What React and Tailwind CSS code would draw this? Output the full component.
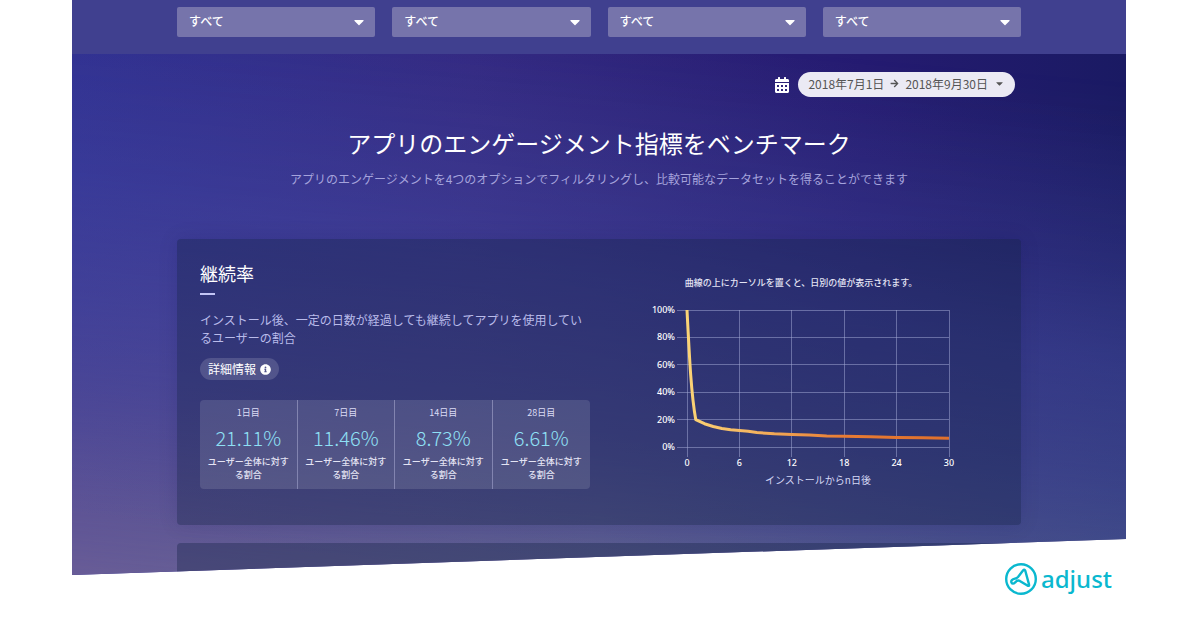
import { FaArrowRight, FaCalendarAlt, FaCaretDown, FaInfoCircle } from "react-icons/fa";

const filters = ["カテゴリー", "地域", "プラットフォーム", "国"];

const stats = [
  { day: "1日目", value: "21.11%" },
  { day: "7日目", value: "11.46%" },
  { day: "14日目", value: "8.73%" },
  { day: "28日目", value: "6.61%" },
];

// [day, retention %]
const retention = [
  [2, 17], [3, 15], [4, 13.5], [5, 12.6], [6, 12], [7, 11.5], [8, 10.6], [10, 9.6],
  [12, 9.1], [14, 8.8], [16, 8.1], [18, 7.8], [21, 7.5], [24, 6.9], [27, 6.7], [30, 6.3],
];

const chart = { left: 46, top: 10, width: 262, height: 137 };
const toX = (day) => chart.left + (day / 30) * chart.width;
const toY = (pct) => chart.top + (1 - pct / 100) * chart.height;

const FilterSelect = ({ label }) => (
  <div className="relative">
    <select
      aria-label={label}
      className="block w-full h-[30px] pl-3 pr-8 pb-0.5 appearance-none rounded-[2px] bg-[#7674ab] text-xs font-medium text-white"
    >
      <option>すべて</option>
    </select>
    <FaCaretDown
      size={16}
      className="absolute right-2 top-1/2 -translate-y-1/2 text-white pointer-events-none"
    />
  </div>
);

const RetentionChart = () => {
  const tail = retention.map(([day, pct]) => `L${toX(day)} ${toY(pct)}`).join(" ");
  const curve = `M${toX(0)} ${toY(100)} C${toX(0.3)} ${toY(62)} ${toX(0.5)} ${toY(38)} ${toX(1)} ${toY(20)} ${tail}`;

  return (
    <svg width="320" height="190" viewBox="0 0 320 190" role="img" aria-label="継続率" className="mt-[10px]">
      <defs>
        <linearGradient id="curve" gradientUnits="userSpaceOnUse" x1="46" y1="0" x2="308" y2="0">
          <stop offset="0" stopColor="#fbd476" />
          <stop offset="0.25" stopColor="#f5b560" />
          <stop offset="0.6" stopColor="#e87b33" />
          <stop offset="1" stopColor="#e0702b" />
        </linearGradient>
      </defs>

      <g stroke="#a5abd8" strokeOpacity="0.5" shapeRendering="crispEdges">
        {[0, 20, 40, 60, 80, 100].map((pct) => (
          <line key={pct} x1={chart.left - 10} x2={toX(30)} y1={toY(pct)} y2={toY(pct)} />
        ))}
        {[0, 6, 12, 18, 24, 30].map((day) => (
          <line key={day} x1={toX(day)} x2={toX(day)} y1={chart.top} y2={toY(0) + 10} />
        ))}
      </g>

      <path d={curve} fill="none" stroke="url(#curve)" strokeWidth="3" strokeLinejoin="round" />

      <g className="fill-white text-[9px] font-medium font-['Noto_Sans','Noto_Sans_CJK_JP',sans-serif]">
        {[0, 20, 40, 60, 80, 100].map((pct) => (
          <text key={pct} x="34" y={toY(pct) + 3} textAnchor="end">
            {pct}%
          </text>
        ))}
        {[0, 6, 12, 18, 24, 30].map((day) => (
          <text key={day} x={toX(day)} y="166" textAnchor="middle">
            {day}
          </text>
        ))}
      </g>
      <text
        x={toX(15)}
        y="184"
        textAnchor="middle"
        className="fill-[#d5d8f5] text-[10px] font-['Noto_Sans_CJK_JP',sans-serif]"
      >
        インストールからn日後
      </text>
    </svg>
  );
};

const Logo = () => (
  <a href="#" className="flex items-center gap-1 text-[#0ab8cf]">
    <svg width="32" height="32" viewBox="0 0 32 32" fill="none" stroke="currentColor">
      <circle cx="16" cy="16" r="14.8" strokeWidth="2.4" />
      <path
        d="M24 21.4 L20.3 7.8 Q19.4 5.8 18 7.6 L13 14 Q12 15.2 10 15.7 Q5.6 16.8 6.4 19.4 Q7.6 21.8 10.2 19.4 Q12.4 16.8 14.8 17.9 L22.4 22.6 Q24.6 23.4 24 21.4 Z"
        strokeWidth="2.4"
        strokeLinejoin="round"
      />
    </svg>
    <span className="text-2xl leading-7 font-medium font-['Noto_Sans',sans-serif]">adjust</span>
  </a>
);

export default function App() {
  return (
    <div className="min-h-screen bg-white overflow-hidden font-['Noto_Sans_CJK_JP',sans-serif]">
      <main className="relative ml-[72px] mr-[74px] bg-[linear-gradient(to_right,#2c2c8d,#32277f_38%,#251b71_75%,#1a1a63)] [clip-path:polygon(0_0,100%_0,100%_calc(100%_-_36px),0_100%)]">
        {/* Lighter haze rising from the bottom left */}
        <div className="absolute inset-0 bg-[linear-gradient(to_right,#685c97,#666a92_50%,#50608c)] [mask-image:linear-gradient(185deg,transparent_12%,rgb(0_0_0/0.15)_40%,rgb(0_0_0/0.5)_70%,black_100%)]" />
        {/* Blue band across the middle */}
        <div className="absolute inset-0 bg-[linear-gradient(190deg,transparent_15%,rgb(64_72_172/0.34)_48%,rgb(64_72_172/0.28)_65%,transparent_92%)]" />

        <div className="relative">
          <div className="px-[105px] pt-[7px] pb-[17px] bg-[#40408f] grid grid-cols-4 gap-[17px]">
            {filters.map((label) => (
              <FilterSelect key={label} label={label} />
            ))}
          </div>

          <div className="px-[105px]">
            <div className="flex justify-end items-center gap-2 pt-[18px] pr-[6px]">
              <FaCalendarAlt size={16} className="text-white" />
              <button
                type="button"
                className="flex items-center gap-[6px] h-[25px] pb-0.5 px-[10px] rounded-full bg-[#ebeaf4] text-xs text-[#555]"
              >
                2018年7月1日
                <FaArrowRight size={9} />
                2018年9月30日
                <FaCaretDown size={11} />
              </button>
            </div>

            <h1 className="mt-[30px] text-2xl leading-8 text-center text-white">
              アプリのエンゲージメント指標をベンチマーク
            </h1>
            <p className="mt-[10px] text-xs leading-5 text-center text-[#a5a3dc]">
              アプリのエンゲージメントを4つのオプションでフィルタリングし、比較可能なデータセットを得ることができます
            </p>

            <section className="mt-[50px] pt-5 pb-[35px] pl-[23px] pr-[25px] grid grid-cols-2 gap-4 rounded-[4px] bg-[#101f42]/35 shadow-[0_0_20px_rgba(20,20,70,0.12)]">
              <div>
                <h2 className="text-lg leading-7 text-white">継続率</h2>
                <div className="mt-[6px] w-[15px] h-0.5 bg-[#c3c5f5]" />
                <p className="mt-4 text-xs leading-[18px] text-[#b9bbea]">
                  インストール後、一定の日数が経過しても継続してアプリを使用しているユーザーの割合
                </p>
                <button
                  type="button"
                  className="mt-[11px] flex items-center gap-1 h-[22px] px-2 rounded-full bg-white/15 text-xs text-white"
                >
                  詳細情報
                  <FaInfoCircle size={11} />
                </button>

                <dl className="mt-5 grid grid-cols-4 rounded-[4px] bg-white/12 divide-x divide-[#8284b0] text-center">
                  {stats.map(({ day, value }) => (
                    <div key={day} className="pt-[6px] pb-2 px-[7px]">
                      <dt className="text-[9px] leading-[14px] text-[#dcdcf5]">{day}</dt>
                      <dd className="mt-1 text-xl leading-7 font-light text-[#8fe0f5]">{value}</dd>
                      <dd className="mt-[3px] text-[9px] leading-[13px] font-medium text-[#e4e4f4]">
                        ユーザー全体に対する割合
                      </dd>
                    </div>
                  ))}
                </dl>
              </div>

              <div className="flex flex-col items-center pt-[17px]">
                <p className="text-[9px] leading-[14px] font-medium text-[#e4e4f4]">
                  曲線の上にカーソルを置くと、日別の値が表示されます。
                </p>
                <RetentionChart />
              </div>
            </section>

            <section className="mt-[18px] h-8 rounded-t-[4px] bg-[#101f42]/35" />
          </div>
        </div>
      </main>

      <footer className="relative -mt-3 mr-[88px] flex justify-end">
        <Logo />
      </footer>
    </div>
  );
}
